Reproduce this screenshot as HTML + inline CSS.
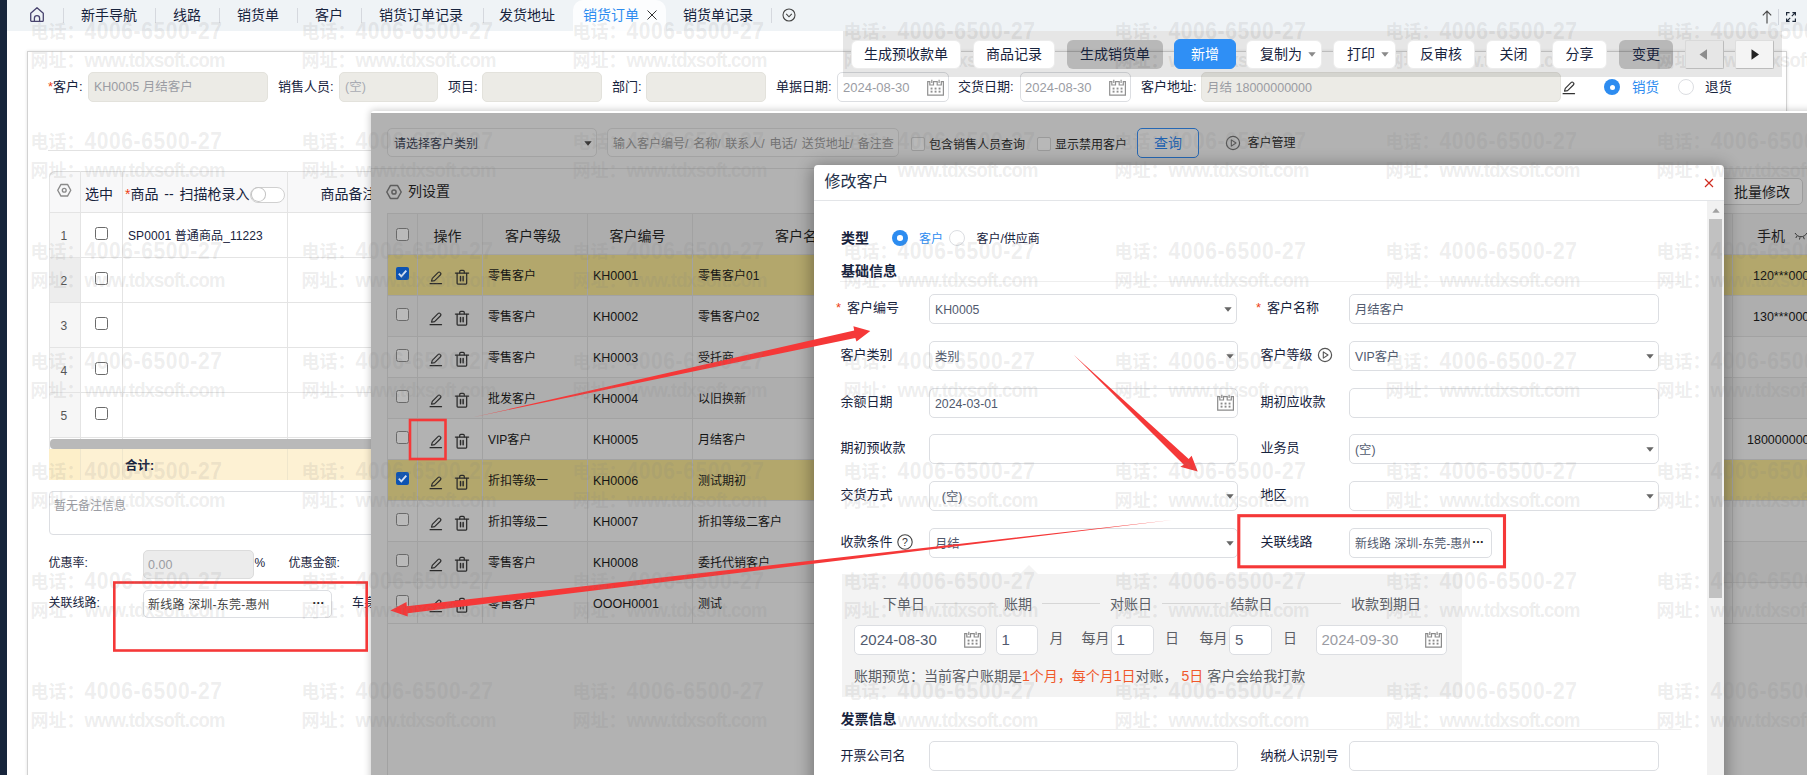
<!DOCTYPE html>
<html lang="zh-CN"><head><meta charset="utf-8"><title>销货订单 - 修改客户</title>
<style>
html,body{margin:0;padding:0;}
body{width:1807px;height:775px;overflow:hidden;background:#fff;position:relative;
 font-family:"Liberation Sans","Noto Sans CJK SC",sans-serif;}
.b{position:absolute;box-sizing:border-box;display:block;}
.t{position:absolute;white-space:nowrap;display:block;}
.bd{font-weight:bold;}
#page{position:absolute;left:0;top:0;width:1807px;height:775px;overflow:hidden;}
.wm{position:absolute;white-space:nowrap;font-weight:bold;font-size:18px;color:rgba(128,128,128,0.14);line-height:24px;height:24px;}
.wm i{font-style:normal;font-size:21px;letter-spacing:0.6px;display:inline-block;transform:scaleY(1.12);transform-origin:50% 56%;}
.wm u{text-decoration:none;font-weight:700;font-size:18.5px;letter-spacing:-0.83px;display:inline-block;transform:scaleY(1.1);transform-origin:50% 60%;}
.btn{position:absolute;box-sizing:border-box;height:28.5px;top:40px;border-radius:6px;background:#fff;border:1px solid #ececec;
 font-size:14px;line-height:27px;text-align:center;color:#17233d;white-space:nowrap;}
.fld{position:absolute;box-sizing:border-box;border:1px solid #dcdee2;border-radius:5px;background:#fff;}
.fb{position:absolute;box-sizing:border-box;border:1px solid #e3e2dc;border-radius:5px;background:#ecebe6;}
</style></head><body><div id="page">

<div class="b" style="left:0px;top:0px;width:1807px;height:30.5px;background:#eff3f6;"></div>
<div class="b" style="left:0px;top:0px;width:7.3px;height:775px;background:#17253b;"></div>
<div class="b" style="left:27px;top:51px;width:1759.8px;height:749px;border:1px solid #d2d2d2;box-shadow:0 0 3px rgba(0,0,0,0.12);background:#fff;"></div>
<div class="b" style="left:572.5px;top:0px;width:93.5px;height:30.5px;background:#fcfdfe;border-radius:10px 10px 0 0;"></div>
<span class="t " style="left:81px;top:5px;height:20px;line-height:20px;font-size:14px;color:#17233d;">新手导航</span>
<span class="t " style="left:173px;top:5px;height:20px;line-height:20px;font-size:14px;color:#17233d;">线路</span>
<span class="t " style="left:237px;top:5px;height:20px;line-height:20px;font-size:14px;color:#17233d;">销货单</span>
<span class="t " style="left:315px;top:5px;height:20px;line-height:20px;font-size:14px;color:#17233d;">客户</span>
<span class="t " style="left:379px;top:5px;height:20px;line-height:20px;font-size:14px;color:#17233d;">销货订单记录</span>
<span class="t " style="left:499px;top:5px;height:20px;line-height:20px;font-size:14px;color:#17233d;">发货地址</span>
<span class="t " style="left:683px;top:5px;height:20px;line-height:20px;font-size:14px;color:#17233d;">销货单记录</span>
<span class="t " style="left:583px;top:5px;height:20px;line-height:20px;font-size:14px;color:#2d8cf0;">销货订单</span>
<svg class="b" style="left:646px;top:9px;" width="12" height="12" viewBox="0 0 12 12" ><path d="M1.5 1.5 L10.5 10.5 M10.5 1.5 L1.5 10.5" stroke="#333" stroke-width="1" fill="none"/></svg>
<div class="b" style="left:63px;top:8px;width:1px;height:15px;background:#d5d8de;"></div>
<div class="b" style="left:155px;top:8px;width:1px;height:15px;background:#d5d8de;"></div>
<div class="b" style="left:219px;top:8px;width:1px;height:15px;background:#d5d8de;"></div>
<div class="b" style="left:297px;top:8px;width:1px;height:15px;background:#d5d8de;"></div>
<div class="b" style="left:361px;top:8px;width:1px;height:15px;background:#d5d8de;"></div>
<div class="b" style="left:483px;top:8px;width:1px;height:15px;background:#d5d8de;"></div>
<div class="b" style="left:771px;top:8px;width:1px;height:15px;background:#d5d8de;"></div>
<svg class="b" style="left:30px;top:7px;" width="14" height="15.2" viewBox="0 0 14 15.2" ><path d="M0.7 6.3 L7 0.8 L13.3 6.3 V13.6 a0.8 0.8 0 0 1 -0.8 0.8 H1.5 a0.8 0.8 0 0 1 -0.8 -0.8 Z" fill="none" stroke="#48436e" stroke-width="1.3" stroke-linejoin="round"/><path d="M4.4 14.3 V11.2 a2.6 2.6 0 0 1 5.2 0 V14.3" fill="none" stroke="#48436e" stroke-width="1.3"/></svg>
<svg class="b" style="left:782px;top:8px;" width="14" height="14" viewBox="0 0 14 14" ><circle cx="7" cy="7" r="6" fill="none" stroke="#444" stroke-width="1.1"/><path d="M4.2 5.8 L7 8.8 L9.8 5.8" fill="none" stroke="#444" stroke-width="1.1"/></svg>
<svg class="b" style="left:1761.8px;top:10.3px;" width="10" height="14" viewBox="0 0 10 14" ><path d="M5 13.5 V1.4 M0.8 5.4 L5 1 L9.2 5.4" fill="none" stroke="#4a4a4a" stroke-width="1.15"/></svg>
<div class="b" style="left:1778px;top:8.5px;width:1px;height:16px;background:#cfd3da;"></div>
<svg class="b" style="left:1786px;top:12px;" width="10" height="10" viewBox="0 0 10 10" ><path d="M0.6 3.6 V0.6 H3.6 M9.4 6.4 V9.4 H6.4 M5.8 4.2 L9.3 0.7 M6.4 0.6 H9.4 V3.6 M4.2 5.8 L0.7 9.3 M0.6 6.4 V9.4 H3.6" fill="none" stroke="#1f2a3a" stroke-width="1.2"/></svg>
<span class="t " style="left:48px;top:77px;height:20px;line-height:20px;font-size:13px;color:#17233d;"><span style="color:#ed4014">*</span>客户:</span>
<div class="fb" style="left:88px;top:72px;width:180px;height:29.5px;"></div>
<span class="t " style="left:94px;top:77px;height:20px;line-height:20px;font-size:12.5px;color:#9a9ca3;">KH0005 月结客户</span>
<span class="t " style="left:278px;top:77px;height:20px;line-height:20px;font-size:13px;color:#17233d;">销售人员:</span>
<div class="fb" style="left:339px;top:72px;width:99px;height:29.5px;"></div>
<span class="t " style="left:345px;top:77px;height:20px;line-height:20px;font-size:12.5px;color:#a9abb3;">(空)</span>
<span class="t " style="left:448px;top:77px;height:20px;line-height:20px;font-size:13px;color:#17233d;">项目:</span>
<div class="fb" style="left:482px;top:72px;width:120px;height:29.5px;"></div>
<span class="t " style="left:612px;top:77px;height:20px;line-height:20px;font-size:13px;color:#17233d;">部门:</span>
<div class="fb" style="left:646px;top:72px;width:120px;height:29.5px;"></div>
<span class="t " style="left:776px;top:77px;height:20px;line-height:20px;font-size:13px;color:#17233d;">单据日期:</span>
<div class="fld" style="left:837px;top:72px;width:111.5px;height:29.5px;"></div>
<span class="t " style="left:843px;top:77.5px;height:20px;line-height:20px;font-size:13px;color:#9a9ca3;">2024-08-30</span>
<svg class="b" style="left:926.5px;top:78.5px;" width="17" height="17" viewBox="0 0 17 17" ><g fill="none" stroke="#909090" stroke-width="1.2" stroke-linejoin="miter"><path d="M0.7 2.7 H2.8 V6 H6.5 V2.7 H10.2 V6 H14.3 V2.7 H16.4 V16.1 H0.7 Z"/><path d="M4.8 0.7 V4 M12.1 0.7 V4"/></g><g fill="#909090"><rect x="3.6" y="8.6" width="1.9" height="1.9"/><rect x="7.6" y="8.6" width="1.9" height="1.9"/><rect x="11.6" y="8.6" width="1.9" height="1.9"/><rect x="3.6" y="11.7" width="1.9" height="1.9"/><rect x="7.6" y="11.7" width="1.9" height="1.9"/><rect x="11.6" y="11.7" width="1.9" height="1.9"/></g></svg>
<span class="t " style="left:958px;top:77px;height:20px;line-height:20px;font-size:13px;color:#17233d;">交货日期:</span>
<div class="fld" style="left:1019.5px;top:72px;width:111px;height:29.5px;"></div>
<span class="t " style="left:1025px;top:77.5px;height:20px;line-height:20px;font-size:13px;color:#9a9ca3;">2024-08-30</span>
<svg class="b" style="left:1108.5px;top:78.5px;" width="17" height="17" viewBox="0 0 17 17" ><g fill="none" stroke="#909090" stroke-width="1.2" stroke-linejoin="miter"><path d="M0.7 2.7 H2.8 V6 H6.5 V2.7 H10.2 V6 H14.3 V2.7 H16.4 V16.1 H0.7 Z"/><path d="M4.8 0.7 V4 M12.1 0.7 V4"/></g><g fill="#909090"><rect x="3.6" y="8.6" width="1.9" height="1.9"/><rect x="7.6" y="8.6" width="1.9" height="1.9"/><rect x="11.6" y="8.6" width="1.9" height="1.9"/><rect x="3.6" y="11.7" width="1.9" height="1.9"/><rect x="7.6" y="11.7" width="1.9" height="1.9"/><rect x="11.6" y="11.7" width="1.9" height="1.9"/></g></svg>
<span class="t " style="left:1141px;top:77px;height:20px;line-height:20px;font-size:13px;color:#17233d;">客户地址:</span>
<div class="fb" style="left:1201px;top:72px;width:360px;height:29.5px;"></div>
<span class="t " style="left:1207px;top:77.5px;height:20px;line-height:20px;font-size:12.5px;color:#9a9ca3;">月结 18000000000</span>
<svg class="b" style="left:1560.8px;top:79.8px;" width="15.4" height="15.4" viewBox="0 0 14 14" ><g fill="none" stroke="#333" stroke-width="1.05" stroke-linejoin="round" stroke-linecap="round"><path d="M3.2 10.2 L3.9 7.6 L9.3 2.2 a1.1 1.1 0 0 1 1.6 0 l0.5 0.5 a1.1 1.1 0 0 1 0 1.6 L6 9.7 Z"/><path d="M1.9 12.4 H12.3"/></g></svg>
<div class="b" style="left:1604px;top:79px;width:16px;height:16px;border-radius:50%;background:#2d8cf0;"></div>
<div class="b" style="left:1609.5px;top:84.5px;width:5px;height:5px;border-radius:50%;background:#fff;"></div>
<span class="t " style="left:1632px;top:78.3px;height:20px;line-height:20px;font-size:13.5px;color:#2d8cf0;">销货</span>
<div class="b" style="left:1678px;top:79px;width:16px;height:16px;border-radius:50%;border:1px solid #dcdee2;background:#fff;"></div>
<span class="t " style="left:1705px;top:78.3px;height:20px;line-height:20px;font-size:13.5px;color:#17233d;">退货</span>
<div class="b" style="left:48px;top:150px;width:332px;height:1px;background:#e2e2e2;"></div>
<div class="b" style="left:48.5px;top:171px;width:331.5px;height:41px;background:#f8f8f9;border-top:1px solid #dcdcdc;border-left:1px solid #dcdcdc;border-radius:6px 0 0 0;"></div>
<div class="b" style="left:48.5px;top:212px;width:31.5px;height:45px;background:#f6f6f6;"></div>
<div class="b" style="left:48.5px;top:257px;width:31.5px;height:45px;background:#ededed;"></div>
<div class="b" style="left:48.5px;top:302px;width:31.5px;height:45px;background:#f6f6f6;"></div>
<div class="b" style="left:48.5px;top:347px;width:31.5px;height:45px;background:#f6f6f6;"></div>
<div class="b" style="left:48.5px;top:392px;width:31.5px;height:45px;background:#f6f6f6;"></div>
<div class="b" style="left:48.5px;top:212px;width:331.5px;height:1px;background:#e4e4e4;"></div>
<div class="b" style="left:48.5px;top:257px;width:331.5px;height:1px;background:#e4e4e4;"></div>
<div class="b" style="left:48.5px;top:302px;width:331.5px;height:1px;background:#e4e4e4;"></div>
<div class="b" style="left:48.5px;top:347px;width:331.5px;height:1px;background:#e4e4e4;"></div>
<div class="b" style="left:48.5px;top:392px;width:331.5px;height:1px;background:#e4e4e4;"></div>
<div class="b" style="left:48.5px;top:437px;width:331.5px;height:1px;background:#e4e4e4;"></div>
<div class="b" style="left:48.5px;top:177px;width:1px;height:303px;background:#e4e4e4;"></div>
<div class="b" style="left:80px;top:171px;width:1px;height:309px;background:#e4e4e4;"></div>
<div class="b" style="left:122px;top:171px;width:1px;height:309px;background:#e4e4e4;"></div>
<div class="b" style="left:287px;top:171px;width:1px;height:309px;background:#e4e4e4;"></div>
<svg class="b" style="left:57.15px;top:182.75px;" width="14.5" height="14.5" viewBox="0 0 16 16" ><g fill="none" stroke="#8a8a8a" stroke-width="1.5" stroke-linejoin="round"><path d="M0.8 8 L4.4 1.6 H11.6 L15.2 8 L11.6 14.4 H4.4 Z"/><circle cx="8" cy="8" r="2.1"/></g></svg>
<span class="t " style="left:85px;top:184px;height:20px;line-height:20px;font-size:14px;color:#17233d;">选中</span>
<span class="t " style="left:125px;top:184px;height:20px;line-height:20px;font-size:14px;color:#17233d;word-spacing:2px;"><span style="color:#ed4014">*</span>商品 -- 扫描枪录入</span>
<div class="b" style="left:250.3px;top:186.8px;width:34.5px;height:16px;border:1px solid #d0d0d0;border-radius:8px;background:#fff;"></div>
<div class="b" style="left:250.8px;top:187.3px;width:15.5px;height:15px;border:1px solid #c4c4c4;border-radius:50%;background:#fff;"></div>
<span class="t " style="left:320.5px;top:184px;height:20px;line-height:20px;font-size:14px;color:#17233d;">商品备注</span>
<span class="t " style="left:53.8px;top:225.7px;width:20px;text-align:center;height:20px;line-height:20px;font-size:12px;color:#555;">1</span>
<div class="b" style="left:95px;top:227px;width:13px;height:13px;border:1px solid #6b6b6b;border-radius:2.5px;background:#fff;"></div>
<span class="t " style="left:53.8px;top:270.7px;width:20px;text-align:center;height:20px;line-height:20px;font-size:12px;color:#555;">2</span>
<div class="b" style="left:95px;top:272px;width:13px;height:13px;border:1px solid #6b6b6b;border-radius:2.5px;background:#fff;"></div>
<span class="t " style="left:53.8px;top:315.7px;width:20px;text-align:center;height:20px;line-height:20px;font-size:12px;color:#555;">3</span>
<div class="b" style="left:95px;top:317px;width:13px;height:13px;border:1px solid #6b6b6b;border-radius:2.5px;background:#fff;"></div>
<span class="t " style="left:53.8px;top:360.7px;width:20px;text-align:center;height:20px;line-height:20px;font-size:12px;color:#555;">4</span>
<div class="b" style="left:95px;top:362px;width:13px;height:13px;border:1px solid #6b6b6b;border-radius:2.5px;background:#fff;"></div>
<span class="t " style="left:53.8px;top:405.7px;width:20px;text-align:center;height:20px;line-height:20px;font-size:12px;color:#555;">5</span>
<div class="b" style="left:95px;top:407px;width:13px;height:13px;border:1px solid #6b6b6b;border-radius:2.5px;background:#fff;"></div>
<span class="t " style="left:128px;top:226px;height:20px;line-height:20px;font-size:12px;color:#17233d;letter-spacing:0.1px;">SP0001 普通商品_11223</span>
<div class="b" style="left:49.5px;top:439px;width:330.5px;height:9.5px;background:#b9b9b9;border-radius:4px 0 0 4px;"></div>
<div class="b" style="left:48.5px;top:448.5px;width:331.5px;height:31.5px;background:#fdf1d3;"></div>
<div class="b" style="left:48.5px;top:448.5px;width:31.5px;height:31.5px;background:#fdefc9;"></div>
<div class="b" style="left:80px;top:448.5px;width:1px;height:31.5px;background:#efe6cc;"></div>
<div class="b" style="left:122px;top:448.5px;width:1px;height:31.5px;background:#efe6cc;"></div>
<div class="b" style="left:287px;top:448.5px;width:1px;height:31.5px;background:#efe6cc;"></div>
<span class="t bd" style="left:125px;top:455.5px;height:20px;line-height:20px;font-size:12.5px;color:#17233d;">合计:</span>
<div class="fld" style="left:48.5px;top:491px;width:360px;height:43.5px;border-radius:4px;"></div>
<span class="t " style="left:54px;top:496.3px;height:20px;line-height:20px;font-size:12px;color:#9a9ca3;">暂无备注信息</span>
<span class="t " style="left:48.5px;top:553px;height:20px;line-height:20px;font-size:12px;color:#17233d;">优惠率:</span>
<div class="fld" style="left:142.5px;top:550px;width:111px;height:28.5px;background:#ececec;border-color:#dcdcdc;"></div>
<span class="t " style="left:148px;top:554.5px;height:20px;line-height:20px;font-size:12.5px;color:#9a9ca3;">0.00</span>
<span class="t " style="left:254.5px;top:552.5px;height:20px;line-height:20px;font-size:12px;color:#17233d;">%</span>
<span class="t " style="left:288.5px;top:553px;height:20px;line-height:20px;font-size:12px;color:#17233d;">优惠金额:</span>
<span class="t " style="left:48.5px;top:593.3px;height:20px;line-height:20px;font-size:12px;color:#17233d;">关联线路:</span>
<div class="fld" style="left:142.5px;top:589.5px;width:189px;height:28.5px;"></div>
<span class="t " style="left:148px;top:595.3px;height:20px;line-height:20px;font-size:12px;color:#444;letter-spacing:0.2px;">新线路 深圳-东莞-惠州</span>
<span class="t bd" style="left:312.5px;top:593.3px;height:20px;line-height:20px;font-size:12.5px;color:#222;letter-spacing:-0.2px;">···</span>
<span class="t " style="left:352px;top:593px;height:20px;line-height:20px;font-size:12px;color:#17233d;">车身</span>
<div class="b" style="left:370.5px;top:111px;width:1529.5px;height:689px;background:#fff;border-radius:3px 0 0 0;box-shadow:0 0 7px 1px rgba(0,0,0,0.2);"></div>
<div class="b" style="left:371px;top:113px;width:1529px;height:687px;background:#b2b2b2;"></div>
<div class="b" style="left:371px;top:168px;width:1436px;height:1px;background:#a2a2a2;"></div>
<div class="b" style="left:387px;top:128.4px;width:210px;height:28.6px;border:1px solid #a3a3a3;border-radius:5px;background:#b4b4b4;"></div>
<span class="t " style="left:394px;top:133.5px;height:20px;line-height:20px;font-size:12px;color:#2a2f3d;">请选择客户类别</span>
<svg class="b" style="left:583.5px;top:140.5px;" width="8" height="5" viewBox="0 0 8 5" ><path d="M0.3 0.3 H7.7 L4 4.7 Z" fill="#333"/></svg>
<div class="b" style="left:607.2px;top:128.4px;width:291.6px;height:28.6px;border:1px solid #a3a3a3;border-radius:5px;background:#b4b4b4;overflow:hidden;"></div>
<span class="t" style="left:613px;top:133.500000px;height:20px;line-height:20px;font-size:12px;color:#727272;width:280.5px;overflow:hidden;word-spacing:1.5px;">输入客户编号/ 名称/ 联系人/ 电话/ 送货地址/ 备注查询</span>
<div class="b" style="left:911px;top:137px;width:13.5px;height:13.5px;border:1px solid #9a9a9a;border-radius:2px;background:#b8b8b8;"></div>
<span class="t " style="left:929px;top:134.5px;height:20px;line-height:20px;font-size:12px;color:#1c1c1c;">包含销售人员查询</span>
<div class="b" style="left:1037.3px;top:137px;width:13.5px;height:13.5px;border:1px solid #9a9a9a;border-radius:2px;background:#b8b8b8;"></div>
<span class="t " style="left:1055px;top:134.5px;height:20px;line-height:20px;font-size:12px;color:#1c1c1c;">显示禁用客户</span>
<div class="b" style="left:1137px;top:128px;width:62px;height:30px;border:1px solid #2668b4;border-radius:5px;background:#b6b6b6;"></div>
<span class="t " style="left:1138px;top:133px;width:60px;text-align:center;height:20px;line-height:20px;font-size:14px;color:#1f62b0;">查询</span>
<svg class="b" style="left:1225.4px;top:134.7px;" width="16" height="16" viewBox="0 0 16 16" ><circle cx="8" cy="8" r="6.6" fill="none" stroke="#555" stroke-width="1.2"/><path d="M6.3 4.9 L11 8 L6.3 11.1 Z" fill="none" stroke="#555" stroke-width="1.1" stroke-linejoin="round"/></svg>
<span class="t " style="left:1247.4px;top:132.6px;height:20px;line-height:20px;font-size:12px;color:#1c1c1c;">客户管理</span>
<svg class="b" style="left:386.4px;top:183.5px;" width="16" height="16" viewBox="0 0 16 16" ><g fill="none" stroke="#5e5e5e" stroke-width="1.5" stroke-linejoin="round"><path d="M0.8 8 L4.4 1.6 H11.6 L15.2 8 L11.6 14.4 H4.4 Z"/><circle cx="8" cy="8" r="2.1"/></g></svg>
<span class="t " style="left:408px;top:181px;height:20px;line-height:20px;font-size:14px;color:#1c1c1c;">列设置</span>
<div class="b" style="left:1700px;top:177.5px;width:103px;height:27.5px;border:1px solid #9c9c9c;border-radius:5px;background:#b9b9b9;"></div>
<span class="t " style="left:1734px;top:181.5px;height:20px;line-height:20px;font-size:14px;color:#1c1c1c;">批量修改</span>
<div class="b" style="left:387px;top:213px;width:1513px;height:41px;background:#adadad;border-radius:4px 0 0 0;"></div>
<div class="b" style="left:387px;top:254px;width:1513px;height:41px;background:#b3a76c;"></div>
<div class="b" style="left:387px;top:459px;width:1513px;height:41px;background:#b3a76c;"></div>
<div class="b" style="left:387px;top:295px;width:1513px;height:41px;background:#aeaeae;"></div>
<div class="b" style="left:387px;top:377px;width:1513px;height:41px;background:#aeaeae;"></div>
<div class="b" style="left:387px;top:541px;width:1513px;height:41px;background:#aeaeae;"></div>
<div class="b" style="left:387px;top:213px;width:1513px;height:1px;background:#a2a2a2;"></div>
<div class="b" style="left:387px;top:254px;width:1513px;height:1px;background:#a2a2a2;"></div>
<div class="b" style="left:387px;top:295px;width:1513px;height:1px;background:#a2a2a2;"></div>
<div class="b" style="left:387px;top:336px;width:1513px;height:1px;background:#a2a2a2;"></div>
<div class="b" style="left:387px;top:377px;width:1513px;height:1px;background:#a2a2a2;"></div>
<div class="b" style="left:387px;top:418px;width:1513px;height:1px;background:#a2a2a2;"></div>
<div class="b" style="left:387px;top:459px;width:1513px;height:1px;background:#a2a2a2;"></div>
<div class="b" style="left:387px;top:500px;width:1513px;height:1px;background:#a2a2a2;"></div>
<div class="b" style="left:387px;top:541px;width:1513px;height:1px;background:#a2a2a2;"></div>
<div class="b" style="left:387px;top:582px;width:1513px;height:1px;background:#a2a2a2;"></div>
<div class="b" style="left:387px;top:623px;width:1513px;height:1px;background:#a2a2a2;"></div>
<div class="b" style="left:387px;top:213px;width:1px;height:587px;background:#a2a2a2;"></div>
<div class="b" style="left:417px;top:213px;width:1px;height:410px;background:#a2a2a2;"></div>
<div class="b" style="left:482px;top:213px;width:1px;height:410px;background:#a2a2a2;"></div>
<div class="b" style="left:587px;top:213px;width:1px;height:410px;background:#a2a2a2;"></div>
<div class="b" style="left:692px;top:213px;width:1px;height:410px;background:#a2a2a2;"></div>
<div class="b" style="left:1732px;top:213px;width:1px;height:410px;background:#a2a2a2;"></div>
<div class="b" style="left:396px;top:228px;width:13px;height:13px;border:1px solid #6a6a6a;border-radius:2.5px;background:#bababa;"></div>
<span class="t " style="left:417.5px;top:225.8px;width:60px;text-align:center;height:20px;line-height:20px;font-size:14px;color:#1c1c1c;">操作</span>
<span class="t " style="left:483px;top:225.8px;width:100px;text-align:center;height:20px;line-height:20px;font-size:14px;color:#1c1c1c;">客户等级</span>
<span class="t " style="left:587.5px;top:225.8px;width:100px;text-align:center;height:20px;line-height:20px;font-size:14px;color:#1c1c1c;">客户编号</span>
<span class="t " style="left:775px;top:225.8px;height:20px;line-height:20px;font-size:14px;color:#1c1c1c;">客户名称</span>
<span class="t " style="left:1757px;top:225.8px;height:20px;line-height:20px;font-size:14px;color:#1c1c1c;">手机</span>
<svg class="b" style="left:1794px;top:231px;" width="14" height="10" viewBox="0 0 14 10" ><path d="M1 2 C4 7 10 7 13 2 M3 5 L1.8 7 M6 6.3 L5.5 8.5 M9.5 6 L10.3 8.2" fill="none" stroke="#333" stroke-width="1"/></svg>
<div class="b" style="left:396px;top:267px;width:13px;height:13px;border-radius:2px;background:#0d53b2;"></div><svg class="b" style="left:396px;top:267px;" width="13" height="13" viewBox="0 0 13 13" ><path d="M2.8 6.7 L5.3 9.3 L10.3 3.6" fill="none" stroke="#d3dff3" stroke-width="1.9"/></svg>
<svg class="b" style="left:428.3px;top:270.3px;" width="15.4" height="15.4" viewBox="0 0 14 14" ><g fill="none" stroke="#2a2a2a" stroke-width="1.05" stroke-linejoin="round" stroke-linecap="round"><path d="M3.2 10.2 L3.9 7.6 L9.3 2.2 a1.1 1.1 0 0 1 1.6 0 l0.5 0.5 a1.1 1.1 0 0 1 0 1.6 L6 9.7 Z"/><path d="M1.9 12.4 H12.3"/></g></svg>
<svg class="b" style="left:453.8px;top:269.3px;" width="16" height="17.1" viewBox="0 0 14 15" ><g fill="none" stroke="#2a2a2a" stroke-width="1.1" stroke-linejoin="round" stroke-linecap="round"><path d="M1.2 3.6 H12.8"/><path d="M5 3.4 V2.2 a0.9 0.9 0 0 1 0.9 -0.9 H8.1 a0.9 0.9 0 0 1 0.9 0.9 V3.4"/><path d="M2.7 3.8 V12.6 a0.7 0.7 0 0 0 0.7 0.7 H10.4 a0.7 0.7 0 0 0 0.7 -0.7 V3.8"/><path d="M5.7 6.5 V10.4 M8 6.5 V10.4" stroke-width="1.3"/></g></svg>
<span class="t " style="left:488px;top:266.2px;height:20px;line-height:20px;font-size:12px;color:#141414;">零售客户</span>
<span class="t " style="left:593px;top:266.2px;height:20px;line-height:20px;font-size:12.5px;color:#141414;">KH0001</span>
<span class="t " style="left:698px;top:266.2px;height:20px;line-height:20px;font-size:12px;color:#141414;">零售客户01</span>
<span class="t " style="left:1753px;top:266.2px;height:20px;line-height:20px;font-size:12.5px;color:#141414;">120***000</span>
<div class="b" style="left:396px;top:308px;width:13px;height:13px;border:1px solid #6a6a6a;border-radius:2.5px;background:#bababa;"></div>
<svg class="b" style="left:428.3px;top:311.3px;" width="15.4" height="15.4" viewBox="0 0 14 14" ><g fill="none" stroke="#2a2a2a" stroke-width="1.05" stroke-linejoin="round" stroke-linecap="round"><path d="M3.2 10.2 L3.9 7.6 L9.3 2.2 a1.1 1.1 0 0 1 1.6 0 l0.5 0.5 a1.1 1.1 0 0 1 0 1.6 L6 9.7 Z"/><path d="M1.9 12.4 H12.3"/></g></svg>
<svg class="b" style="left:453.8px;top:310.3px;" width="16" height="17.1" viewBox="0 0 14 15" ><g fill="none" stroke="#2a2a2a" stroke-width="1.1" stroke-linejoin="round" stroke-linecap="round"><path d="M1.2 3.6 H12.8"/><path d="M5 3.4 V2.2 a0.9 0.9 0 0 1 0.9 -0.9 H8.1 a0.9 0.9 0 0 1 0.9 0.9 V3.4"/><path d="M2.7 3.8 V12.6 a0.7 0.7 0 0 0 0.7 0.7 H10.4 a0.7 0.7 0 0 0 0.7 -0.7 V3.8"/><path d="M5.7 6.5 V10.4 M8 6.5 V10.4" stroke-width="1.3"/></g></svg>
<span class="t " style="left:488px;top:307.2px;height:20px;line-height:20px;font-size:12px;color:#141414;">零售客户</span>
<span class="t " style="left:593px;top:307.2px;height:20px;line-height:20px;font-size:12.5px;color:#141414;">KH0002</span>
<span class="t " style="left:698px;top:307.2px;height:20px;line-height:20px;font-size:12px;color:#141414;">零售客户02</span>
<span class="t " style="left:1753px;top:307.2px;height:20px;line-height:20px;font-size:12.5px;color:#141414;">130***000</span>
<div class="b" style="left:396px;top:349px;width:13px;height:13px;border:1px solid #6a6a6a;border-radius:2.5px;background:#bababa;"></div>
<svg class="b" style="left:428.3px;top:352.3px;" width="15.4" height="15.4" viewBox="0 0 14 14" ><g fill="none" stroke="#2a2a2a" stroke-width="1.05" stroke-linejoin="round" stroke-linecap="round"><path d="M3.2 10.2 L3.9 7.6 L9.3 2.2 a1.1 1.1 0 0 1 1.6 0 l0.5 0.5 a1.1 1.1 0 0 1 0 1.6 L6 9.7 Z"/><path d="M1.9 12.4 H12.3"/></g></svg>
<svg class="b" style="left:453.8px;top:351.3px;" width="16" height="17.1" viewBox="0 0 14 15" ><g fill="none" stroke="#2a2a2a" stroke-width="1.1" stroke-linejoin="round" stroke-linecap="round"><path d="M1.2 3.6 H12.8"/><path d="M5 3.4 V2.2 a0.9 0.9 0 0 1 0.9 -0.9 H8.1 a0.9 0.9 0 0 1 0.9 0.9 V3.4"/><path d="M2.7 3.8 V12.6 a0.7 0.7 0 0 0 0.7 0.7 H10.4 a0.7 0.7 0 0 0 0.7 -0.7 V3.8"/><path d="M5.7 6.5 V10.4 M8 6.5 V10.4" stroke-width="1.3"/></g></svg>
<span class="t " style="left:488px;top:348.2px;height:20px;line-height:20px;font-size:12px;color:#141414;">零售客户</span>
<span class="t " style="left:593px;top:348.2px;height:20px;line-height:20px;font-size:12.5px;color:#141414;">KH0003</span>
<span class="t " style="left:698px;top:348.2px;height:20px;line-height:20px;font-size:12px;color:#141414;">受托商</span>
<div class="b" style="left:396px;top:390px;width:13px;height:13px;border:1px solid #6a6a6a;border-radius:2.5px;background:#bababa;"></div>
<svg class="b" style="left:428.3px;top:393.3px;" width="15.4" height="15.4" viewBox="0 0 14 14" ><g fill="none" stroke="#2a2a2a" stroke-width="1.05" stroke-linejoin="round" stroke-linecap="round"><path d="M3.2 10.2 L3.9 7.6 L9.3 2.2 a1.1 1.1 0 0 1 1.6 0 l0.5 0.5 a1.1 1.1 0 0 1 0 1.6 L6 9.7 Z"/><path d="M1.9 12.4 H12.3"/></g></svg>
<svg class="b" style="left:453.8px;top:392.3px;" width="16" height="17.1" viewBox="0 0 14 15" ><g fill="none" stroke="#2a2a2a" stroke-width="1.1" stroke-linejoin="round" stroke-linecap="round"><path d="M1.2 3.6 H12.8"/><path d="M5 3.4 V2.2 a0.9 0.9 0 0 1 0.9 -0.9 H8.1 a0.9 0.9 0 0 1 0.9 0.9 V3.4"/><path d="M2.7 3.8 V12.6 a0.7 0.7 0 0 0 0.7 0.7 H10.4 a0.7 0.7 0 0 0 0.7 -0.7 V3.8"/><path d="M5.7 6.5 V10.4 M8 6.5 V10.4" stroke-width="1.3"/></g></svg>
<span class="t " style="left:488px;top:389.2px;height:20px;line-height:20px;font-size:12px;color:#141414;">批发客户</span>
<span class="t " style="left:593px;top:389.2px;height:20px;line-height:20px;font-size:12.5px;color:#141414;">KH0004</span>
<span class="t " style="left:698px;top:389.2px;height:20px;line-height:20px;font-size:12px;color:#141414;">以旧换新</span>
<div class="b" style="left:396px;top:431px;width:13px;height:13px;border:1px solid #6a6a6a;border-radius:2.5px;background:#bababa;"></div>
<svg class="b" style="left:428.3px;top:434.3px;" width="15.4" height="15.4" viewBox="0 0 14 14" ><g fill="none" stroke="#2a2a2a" stroke-width="1.05" stroke-linejoin="round" stroke-linecap="round"><path d="M3.2 10.2 L3.9 7.6 L9.3 2.2 a1.1 1.1 0 0 1 1.6 0 l0.5 0.5 a1.1 1.1 0 0 1 0 1.6 L6 9.7 Z"/><path d="M1.9 12.4 H12.3"/></g></svg>
<svg class="b" style="left:453.8px;top:433.3px;" width="16" height="17.1" viewBox="0 0 14 15" ><g fill="none" stroke="#2a2a2a" stroke-width="1.1" stroke-linejoin="round" stroke-linecap="round"><path d="M1.2 3.6 H12.8"/><path d="M5 3.4 V2.2 a0.9 0.9 0 0 1 0.9 -0.9 H8.1 a0.9 0.9 0 0 1 0.9 0.9 V3.4"/><path d="M2.7 3.8 V12.6 a0.7 0.7 0 0 0 0.7 0.7 H10.4 a0.7 0.7 0 0 0 0.7 -0.7 V3.8"/><path d="M5.7 6.5 V10.4 M8 6.5 V10.4" stroke-width="1.3"/></g></svg>
<span class="t " style="left:488px;top:430.2px;height:20px;line-height:20px;font-size:12px;color:#141414;">VIP客户</span>
<span class="t " style="left:593px;top:430.2px;height:20px;line-height:20px;font-size:12.5px;color:#141414;">KH0005</span>
<span class="t " style="left:698px;top:430.2px;height:20px;line-height:20px;font-size:12px;color:#141414;">月结客户</span>
<span class="t " style="left:1747px;top:430.2px;height:20px;line-height:20px;font-size:12.5px;color:#141414;">18000000000</span>
<div class="b" style="left:396px;top:472px;width:13px;height:13px;border-radius:2px;background:#0d53b2;"></div><svg class="b" style="left:396px;top:472px;" width="13" height="13" viewBox="0 0 13 13" ><path d="M2.8 6.7 L5.3 9.3 L10.3 3.6" fill="none" stroke="#d3dff3" stroke-width="1.9"/></svg>
<svg class="b" style="left:428.3px;top:475.3px;" width="15.4" height="15.4" viewBox="0 0 14 14" ><g fill="none" stroke="#2a2a2a" stroke-width="1.05" stroke-linejoin="round" stroke-linecap="round"><path d="M3.2 10.2 L3.9 7.6 L9.3 2.2 a1.1 1.1 0 0 1 1.6 0 l0.5 0.5 a1.1 1.1 0 0 1 0 1.6 L6 9.7 Z"/><path d="M1.9 12.4 H12.3"/></g></svg>
<svg class="b" style="left:453.8px;top:474.3px;" width="16" height="17.1" viewBox="0 0 14 15" ><g fill="none" stroke="#2a2a2a" stroke-width="1.1" stroke-linejoin="round" stroke-linecap="round"><path d="M1.2 3.6 H12.8"/><path d="M5 3.4 V2.2 a0.9 0.9 0 0 1 0.9 -0.9 H8.1 a0.9 0.9 0 0 1 0.9 0.9 V3.4"/><path d="M2.7 3.8 V12.6 a0.7 0.7 0 0 0 0.7 0.7 H10.4 a0.7 0.7 0 0 0 0.7 -0.7 V3.8"/><path d="M5.7 6.5 V10.4 M8 6.5 V10.4" stroke-width="1.3"/></g></svg>
<span class="t " style="left:488px;top:471.2px;height:20px;line-height:20px;font-size:12px;color:#141414;">折扣等级一</span>
<span class="t " style="left:593px;top:471.2px;height:20px;line-height:20px;font-size:12.5px;color:#141414;">KH0006</span>
<span class="t " style="left:698px;top:471.2px;height:20px;line-height:20px;font-size:12px;color:#141414;">测试期初</span>
<div class="b" style="left:396px;top:513px;width:13px;height:13px;border:1px solid #6a6a6a;border-radius:2.5px;background:#bababa;"></div>
<svg class="b" style="left:428.3px;top:516.3px;" width="15.4" height="15.4" viewBox="0 0 14 14" ><g fill="none" stroke="#2a2a2a" stroke-width="1.05" stroke-linejoin="round" stroke-linecap="round"><path d="M3.2 10.2 L3.9 7.6 L9.3 2.2 a1.1 1.1 0 0 1 1.6 0 l0.5 0.5 a1.1 1.1 0 0 1 0 1.6 L6 9.7 Z"/><path d="M1.9 12.4 H12.3"/></g></svg>
<svg class="b" style="left:453.8px;top:515.3px;" width="16" height="17.1" viewBox="0 0 14 15" ><g fill="none" stroke="#2a2a2a" stroke-width="1.1" stroke-linejoin="round" stroke-linecap="round"><path d="M1.2 3.6 H12.8"/><path d="M5 3.4 V2.2 a0.9 0.9 0 0 1 0.9 -0.9 H8.1 a0.9 0.9 0 0 1 0.9 0.9 V3.4"/><path d="M2.7 3.8 V12.6 a0.7 0.7 0 0 0 0.7 0.7 H10.4 a0.7 0.7 0 0 0 0.7 -0.7 V3.8"/><path d="M5.7 6.5 V10.4 M8 6.5 V10.4" stroke-width="1.3"/></g></svg>
<span class="t " style="left:488px;top:512.2px;height:20px;line-height:20px;font-size:12px;color:#141414;">折扣等级二</span>
<span class="t " style="left:593px;top:512.2px;height:20px;line-height:20px;font-size:12.5px;color:#141414;">KH0007</span>
<span class="t " style="left:698px;top:512.2px;height:20px;line-height:20px;font-size:12px;color:#141414;">折扣等级二客户</span>
<div class="b" style="left:396px;top:554px;width:13px;height:13px;border:1px solid #6a6a6a;border-radius:2.5px;background:#bababa;"></div>
<svg class="b" style="left:428.3px;top:557.3px;" width="15.4" height="15.4" viewBox="0 0 14 14" ><g fill="none" stroke="#2a2a2a" stroke-width="1.05" stroke-linejoin="round" stroke-linecap="round"><path d="M3.2 10.2 L3.9 7.6 L9.3 2.2 a1.1 1.1 0 0 1 1.6 0 l0.5 0.5 a1.1 1.1 0 0 1 0 1.6 L6 9.7 Z"/><path d="M1.9 12.4 H12.3"/></g></svg>
<svg class="b" style="left:453.8px;top:556.3px;" width="16" height="17.1" viewBox="0 0 14 15" ><g fill="none" stroke="#2a2a2a" stroke-width="1.1" stroke-linejoin="round" stroke-linecap="round"><path d="M1.2 3.6 H12.8"/><path d="M5 3.4 V2.2 a0.9 0.9 0 0 1 0.9 -0.9 H8.1 a0.9 0.9 0 0 1 0.9 0.9 V3.4"/><path d="M2.7 3.8 V12.6 a0.7 0.7 0 0 0 0.7 0.7 H10.4 a0.7 0.7 0 0 0 0.7 -0.7 V3.8"/><path d="M5.7 6.5 V10.4 M8 6.5 V10.4" stroke-width="1.3"/></g></svg>
<span class="t " style="left:488px;top:553.2px;height:20px;line-height:20px;font-size:12px;color:#141414;">零售客户</span>
<span class="t " style="left:593px;top:553.2px;height:20px;line-height:20px;font-size:12.5px;color:#141414;">KH0008</span>
<span class="t " style="left:698px;top:553.2px;height:20px;line-height:20px;font-size:12px;color:#141414;">委托代销客户</span>
<div class="b" style="left:396px;top:595px;width:13px;height:13px;border:1px solid #6a6a6a;border-radius:2.5px;background:#bababa;"></div>
<svg class="b" style="left:428.3px;top:598.3px;" width="15.4" height="15.4" viewBox="0 0 14 14" ><g fill="none" stroke="#2a2a2a" stroke-width="1.05" stroke-linejoin="round" stroke-linecap="round"><path d="M3.2 10.2 L3.9 7.6 L9.3 2.2 a1.1 1.1 0 0 1 1.6 0 l0.5 0.5 a1.1 1.1 0 0 1 0 1.6 L6 9.7 Z"/><path d="M1.9 12.4 H12.3"/></g></svg>
<svg class="b" style="left:453.8px;top:597.3px;" width="16" height="17.1" viewBox="0 0 14 15" ><g fill="none" stroke="#2a2a2a" stroke-width="1.1" stroke-linejoin="round" stroke-linecap="round"><path d="M1.2 3.6 H12.8"/><path d="M5 3.4 V2.2 a0.9 0.9 0 0 1 0.9 -0.9 H8.1 a0.9 0.9 0 0 1 0.9 0.9 V3.4"/><path d="M2.7 3.8 V12.6 a0.7 0.7 0 0 0 0.7 0.7 H10.4 a0.7 0.7 0 0 0 0.7 -0.7 V3.8"/><path d="M5.7 6.5 V10.4 M8 6.5 V10.4" stroke-width="1.3"/></g></svg>
<span class="t " style="left:488px;top:594.2px;height:20px;line-height:20px;font-size:12px;color:#141414;">零售客户</span>
<span class="t " style="left:593px;top:594.2px;height:20px;line-height:20px;font-size:12.5px;color:#141414;">OOOH0001</span>
<span class="t " style="left:698px;top:594.2px;height:20px;line-height:20px;font-size:12px;color:#141414;">测试</span>
<div class="b" style="left:813.8px;top:165px;width:909.8px;height:635px;background:#fff;border-radius:4px 4px 0 0;box-shadow:0 3px 16px 3px rgba(0,0,0,0.32);"></div>
<span class="t " style="left:824.5px;top:169.5px;height:24px;line-height:24px;font-size:16px;color:#243048;">修改客户</span>
<svg class="b" style="left:1704px;top:177.5px;" width="10" height="10" viewBox="0 0 10 10" ><path d="M1 1 L9 9 M9 1 L1 9" stroke="#cf2a1e" stroke-width="1.15" fill="none"/></svg>
<div class="b" style="left:813.8px;top:200px;width:909.8px;height:1px;background:#e3e5e8;"></div>
<div class="b" style="left:1707px;top:201px;width:16.5px;height:599px;background:#f1f1f1;"></div>
<div class="b" style="left:1709px;top:218.5px;width:13px;height:379.5px;background:#c1c1c1;"></div>
<svg class="b" style="left:1712px;top:207.5px;" width="8" height="5" viewBox="0 0 8 5" ><path d="M0.3 4.7 H7.7 L4 0.3 Z" fill="#a0a0a0"/></svg>
<span class="t bd" style="left:841px;top:228px;height:20px;line-height:20px;font-size:14px;color:#17233d;">类型</span>
<div class="b" style="left:892px;top:230px;width:16px;height:16px;border-radius:50%;background:#2d8cf0;"></div>
<div class="b" style="left:897.2px;top:235.2px;width:5.6px;height:5.6px;border-radius:50%;background:#fff;"></div>
<span class="t " style="left:919px;top:229px;height:20px;line-height:20px;font-size:12px;color:#2d8cf0;">客户</span>
<div class="b" style="left:949px;top:230px;width:16px;height:16px;border-radius:50%;border:1px solid #dcdee2;background:#fff;"></div>
<span class="t " style="left:976.5px;top:229px;height:20px;line-height:20px;font-size:12px;color:#17233d;">客户/供应商</span>
<span class="t bd" style="left:841px;top:260.5px;height:20px;line-height:20px;font-size:14px;color:#17233d;">基础信息</span>
<div class="b" style="left:840px;top:281px;width:841px;height:1px;background:#eeeeee;"></div>
<span class="t " style="left:836px;top:298px;height:20px;line-height:20px;font-size:13px;color:#ed4014;">*</span>
<span class="t " style="left:847px;top:297.5px;height:20px;line-height:20px;font-size:13px;color:#17233d;">客户编号</span>
<div class="fld" style="left:929.3px;top:294px;width:307.5px;height:30px;"></div>
<span class="t " style="left:935px;top:299.5px;height:20px;line-height:20px;font-size:12.3px;color:#515a6e;">KH0005</span>
<svg class="b" style="left:1224.2px;top:306.5px;" width="8" height="5" viewBox="0 0 8 5" ><path d="M0.3 0.3 H7.7 L4 4.7 Z" fill="#666"/></svg>
<span class="t " style="left:1256px;top:298px;height:20px;line-height:20px;font-size:13px;color:#ed4014;">*</span>
<span class="t " style="left:1267px;top:297.5px;height:20px;line-height:20px;font-size:13px;color:#17233d;">客户名称</span>
<div class="fld" style="left:1349px;top:294px;width:310px;height:30px;"></div>
<span class="t " style="left:1355px;top:299.5px;height:20px;line-height:20px;font-size:12.3px;color:#515a6e;">月结客户</span>
<span class="t " style="left:840.5px;top:344.5px;height:20px;line-height:20px;font-size:13px;color:#17233d;">客户类别</span>
<div class="fld" style="left:929.3px;top:341px;width:309.2px;height:30px;"></div>
<span class="t " style="left:935px;top:346.5px;height:20px;line-height:20px;font-size:12.3px;color:#515a6e;">类别</span>
<svg class="b" style="left:1226px;top:353.5px;" width="8" height="5" viewBox="0 0 8 5" ><path d="M0.3 0.3 H7.7 L4 4.7 Z" fill="#666"/></svg>
<span class="t " style="left:1260.5px;top:344.5px;height:20px;line-height:20px;font-size:13px;color:#17233d;">客户等级</span>
<div class="fld" style="left:1349px;top:341px;width:310px;height:30px;"></div>
<span class="t " style="left:1355px;top:346.5px;height:20px;line-height:20px;font-size:12.3px;color:#515a6e;">VIP客户</span>
<svg class="b" style="left:1646px;top:353.5px;" width="8" height="5" viewBox="0 0 8 5" ><path d="M0.3 0.3 H7.7 L4 4.7 Z" fill="#666"/></svg>
<svg class="b" style="left:1317px;top:347.3px;" width="16" height="16" viewBox="0 0 16 16" ><circle cx="8" cy="8" r="6.6" fill="none" stroke="#555" stroke-width="1.2"/><path d="M6.3 4.9 L11 8 L6.3 11.1 Z" fill="none" stroke="#555" stroke-width="1.1" stroke-linejoin="round"/></svg>
<span class="t " style="left:840.5px;top:391.5px;height:20px;line-height:20px;font-size:13px;color:#17233d;">余额日期</span>
<div class="fld" style="left:929.3px;top:388px;width:309.2px;height:30px;"></div>
<span class="t " style="left:935px;top:393.5px;height:20px;line-height:20px;font-size:12.3px;color:#515a6e;">2024-03-01</span>
<svg class="b" style="left:1216.5px;top:394px;" width="17" height="17" viewBox="0 0 17 17" ><g fill="none" stroke="#8a8a8a" stroke-width="1.2" stroke-linejoin="miter"><path d="M0.7 2.7 H2.8 V6 H6.5 V2.7 H10.2 V6 H14.3 V2.7 H16.4 V16.1 H0.7 Z"/><path d="M4.8 0.7 V4 M12.1 0.7 V4"/></g><g fill="#8a8a8a"><rect x="3.6" y="8.6" width="1.9" height="1.9"/><rect x="7.6" y="8.6" width="1.9" height="1.9"/><rect x="11.6" y="8.6" width="1.9" height="1.9"/><rect x="3.6" y="11.7" width="1.9" height="1.9"/><rect x="7.6" y="11.7" width="1.9" height="1.9"/><rect x="11.6" y="11.7" width="1.9" height="1.9"/></g></svg>
<span class="t " style="left:1260.5px;top:391.5px;height:20px;line-height:20px;font-size:13px;color:#17233d;">期初应收款</span>
<div class="fld" style="left:1349px;top:388px;width:310px;height:30px;"></div>
<span class="t " style="left:840.5px;top:437.5px;height:20px;line-height:20px;font-size:13px;color:#17233d;">期初预收款</span>
<div class="fld" style="left:929.3px;top:434px;width:309.2px;height:30px;"></div>
<span class="t " style="left:1260.5px;top:437.5px;height:20px;line-height:20px;font-size:13px;color:#17233d;">业务员</span>
<div class="fld" style="left:1349px;top:434px;width:310px;height:30px;"></div>
<span class="t " style="left:1355px;top:439.5px;height:20px;line-height:20px;font-size:12.3px;color:#515a6e;">(空)</span>
<svg class="b" style="left:1646px;top:446.5px;" width="8" height="5" viewBox="0 0 8 5" ><path d="M0.3 0.3 H7.7 L4 4.7 Z" fill="#666"/></svg>
<span class="t " style="left:840.5px;top:484.5px;height:20px;line-height:20px;font-size:13px;color:#17233d;">交货方式</span>
<div class="fld" style="left:929.3px;top:481px;width:309.2px;height:30px;"></div>
<span class="t " style="left:935px;top:486.5px;height:20px;line-height:20px;font-size:12.3px;color:#515a6e;">&nbsp;&nbsp;(空)</span>
<svg class="b" style="left:1226px;top:493.5px;" width="8" height="5" viewBox="0 0 8 5" ><path d="M0.3 0.3 H7.7 L4 4.7 Z" fill="#666"/></svg>
<span class="t " style="left:1260.5px;top:484.5px;height:20px;line-height:20px;font-size:13px;color:#17233d;">地区</span>
<div class="fld" style="left:1349px;top:481px;width:310px;height:30px;"></div>
<svg class="b" style="left:1646px;top:493.5px;" width="8" height="5" viewBox="0 0 8 5" ><path d="M0.3 0.3 H7.7 L4 4.7 Z" fill="#666"/></svg>
<span class="t " style="left:840.5px;top:531.5px;height:20px;line-height:20px;font-size:13px;color:#17233d;">收款条件</span>
<div class="fld" style="left:929.3px;top:528px;width:309.2px;height:30px;"></div>
<span class="t " style="left:935px;top:533.5px;height:20px;line-height:20px;font-size:12.3px;color:#515a6e;">月结</span>
<svg class="b" style="left:1226px;top:540.5px;" width="8" height="5" viewBox="0 0 8 5" ><path d="M0.3 0.3 H7.7 L4 4.7 Z" fill="#666"/></svg>
<svg class="b" style="left:896.5px;top:533.6px;" width="16" height="16" viewBox="0 0 16 16" ><circle cx="8" cy="8" r="7.2" fill="none" stroke="#444" stroke-width="1.1"/><text x="8" y="11.6" font-size="10.5" text-anchor="middle" fill="#333" font-family="Liberation Sans, sans-serif">?</text></svg>
<span class="t " style="left:1260.5px;top:531.5px;height:20px;line-height:20px;font-size:13px;color:#17233d;">关联线路</span>
<div class="fld" style="left:1349px;top:528px;width:143px;height:30px;"></div>
<span class="t" style="left:1355px;top:533.5px;height:20px;line-height:20px;font-size:12px;color:#515a6e;width:115px;overflow:hidden;">新线路 深圳-东莞-惠州</span>
<span class="t bd" style="left:1472.2px;top:532.3px;height:20px;line-height:20px;font-size:12.5px;color:#222;letter-spacing:-0.2px;">···</span>
<svg class="b" style="left:1020px;top:565px;" width="18" height="9" viewBox="0 0 18 9" ><path d="M0 9 L9 0 L18 9 Z" fill="#f3f3f3"/></svg>
<div class="b" style="left:842px;top:573.5px;width:620px;height:123px;background:#f3f3f3;"></div>
<span class="t " style="left:883px;top:594px;height:20px;line-height:20px;font-size:14px;color:#5c5f66;">下单日</span>
<span class="t " style="left:1004px;top:594px;height:20px;line-height:20px;font-size:14px;color:#5c5f66;">账期</span>
<span class="t " style="left:1110px;top:594px;height:20px;line-height:20px;font-size:14px;color:#5c5f66;">对账日</span>
<span class="t " style="left:1230.5px;top:594px;height:20px;line-height:20px;font-size:14px;color:#5c5f66;">结款日</span>
<span class="t " style="left:1351px;top:594px;height:20px;line-height:20px;font-size:14px;color:#5c5f66;">收款到期日</span>
<div class="b" style="left:935px;top:602.5px;width:59.5px;height:1px;background:#d6d6d6;"></div>
<div class="b" style="left:1041.5px;top:602.5px;width:58.5px;height:1px;background:#d6d6d6;"></div>
<div class="b" style="left:1161.5px;top:602.5px;width:59px;height:1px;background:#d6d6d6;"></div>
<div class="b" style="left:1282.5px;top:602.5px;width:58.5px;height:1px;background:#d6d6d6;"></div>
<div class="fld" style="left:854px;top:625px;width:131.5px;height:29.5px;"></div>
<span class="t " style="left:860px;top:630.3px;height:20px;line-height:20px;font-size:15px;color:#515a6e;">2024-08-30</span>
<svg class="b" style="left:963.5px;top:631px;" width="17" height="17" viewBox="0 0 17 17" ><g fill="none" stroke="#8a8a8a" stroke-width="1.2" stroke-linejoin="miter"><path d="M0.7 2.7 H2.8 V6 H6.5 V2.7 H10.2 V6 H14.3 V2.7 H16.4 V16.1 H0.7 Z"/><path d="M4.8 0.7 V4 M12.1 0.7 V4"/></g><g fill="#8a8a8a"><rect x="3.6" y="8.6" width="1.9" height="1.9"/><rect x="7.6" y="8.6" width="1.9" height="1.9"/><rect x="11.6" y="8.6" width="1.9" height="1.9"/><rect x="3.6" y="11.7" width="1.9" height="1.9"/><rect x="7.6" y="11.7" width="1.9" height="1.9"/><rect x="11.6" y="11.7" width="1.9" height="1.9"/></g></svg>
<div class="fld" style="left:995.5px;top:625px;width:42.5px;height:29.5px;"></div>
<span class="t " style="left:1001.5px;top:630.3px;height:20px;line-height:20px;font-size:15px;color:#515a6e;">1</span>
<span class="t " style="left:1049.5px;top:628px;height:20px;line-height:20px;font-size:14px;color:#5c5f66;">月</span>
<span class="t " style="left:1081.5px;top:628px;height:20px;line-height:20px;font-size:14px;color:#5c5f66;">每月</span>
<div class="fld" style="left:1110.5px;top:625px;width:43px;height:29.5px;"></div>
<span class="t " style="left:1116.5px;top:630.3px;height:20px;line-height:20px;font-size:15px;color:#515a6e;">1</span>
<span class="t " style="left:1165px;top:628px;height:20px;line-height:20px;font-size:14px;color:#5c5f66;">日</span>
<span class="t " style="left:1199.5px;top:628px;height:20px;line-height:20px;font-size:14px;color:#5c5f66;">每月</span>
<div class="fld" style="left:1229px;top:625px;width:42.5px;height:29.5px;"></div>
<span class="t " style="left:1235px;top:630.3px;height:20px;line-height:20px;font-size:15px;color:#515a6e;">5</span>
<span class="t " style="left:1283px;top:628px;height:20px;line-height:20px;font-size:14px;color:#5c5f66;">日</span>
<div class="fld" style="left:1315.5px;top:625px;width:131px;height:29.5px;"></div>
<span class="t " style="left:1321.5px;top:630.3px;height:20px;line-height:20px;font-size:15px;color:#9a9ca3;">2024-09-30</span>
<svg class="b" style="left:1424.5px;top:631px;" width="17" height="17" viewBox="0 0 17 17" ><g fill="none" stroke="#8a8a8a" stroke-width="1.2" stroke-linejoin="miter"><path d="M0.7 2.7 H2.8 V6 H6.5 V2.7 H10.2 V6 H14.3 V2.7 H16.4 V16.1 H0.7 Z"/><path d="M4.8 0.7 V4 M12.1 0.7 V4"/></g><g fill="#8a8a8a"><rect x="3.6" y="8.6" width="1.9" height="1.9"/><rect x="7.6" y="8.6" width="1.9" height="1.9"/><rect x="11.6" y="8.6" width="1.9" height="1.9"/><rect x="3.6" y="11.7" width="1.9" height="1.9"/><rect x="7.6" y="11.7" width="1.9" height="1.9"/><rect x="11.6" y="11.7" width="1.9" height="1.9"/></g></svg>
<span class="t " style="left:854px;top:666px;height:20px;line-height:20px;font-size:14px;color:#5c5f66;">账期预览：当前客户账期是<span style="color:#f0582a">1个月，每个月1日</span>对账， <span style="color:#f0582a">5日</span> 客户会给我打款</span>
<span class="t bd" style="left:840.5px;top:708.5px;height:20px;line-height:20px;font-size:14px;color:#17233d;">发票信息</span>
<div class="b" style="left:840px;top:729px;width:841px;height:1px;background:#eeeeee;"></div>
<span class="t " style="left:840.5px;top:745.5px;height:20px;line-height:20px;font-size:13px;color:#17233d;">开票公司名</span>
<div class="fld" style="left:929.3px;top:741px;width:309.2px;height:30px;"></div>
<span class="t " style="left:1260.5px;top:745.5px;height:20px;line-height:20px;font-size:13px;color:#17233d;">纳税人识别号</span>
<div class="fld" style="left:1349px;top:741px;width:310px;height:30px;"></div>
<svg class="b" style="left:0;top:0;" width="1807" height="775" viewBox="0 0 1807 775">
<g fill="none" stroke="#f53838" stroke-width="2.6">
<rect x="114.3" y="582.5" width="252.4" height="68"/>
<rect x="410" y="420" width="35.5" height="39"/>
<rect x="1238.8" y="515.7" width="265.7" height="51.1" stroke-width="3.1"/>
</g><g fill="#f53838" stroke="none">
<path d="M473 417.3 L854.2 330.6 L853.4 326.3 L870.3 331 L856.5 341.4 L855.3 337.9 Z"/>
<path d="M1073.9 355.1 L1188.7 459 L1191.6 455.7 L1197.7 471.6 L1180.3 466.7 L1183.8 464.8 Z"/>
<path d="M1172 520 L406.8 606.2 L406.5 602 L390.3 610.6 L407.7 616.5 L407.7 613.2 Z"/>
</g></svg>
<span class="wm" style="left:30.5px;top:19.4px;">电话：<i>4006-6500-27</i></span>
<span class="wm" style="left:30.5px;top:48.5px;">网址：<u>www.tdxsoft.com</u></span>
<span class="wm" style="left:301.5px;top:19.4px;">电话：<i>4006-6500-27</i></span>
<span class="wm" style="left:301.5px;top:48.5px;">网址：<u>www.tdxsoft.com</u></span>
<span class="wm" style="left:572.5px;top:19.4px;">电话：<i>4006-6500-27</i></span>
<span class="wm" style="left:572.5px;top:48.5px;">网址：<u>www.tdxsoft.com</u></span>
<span class="wm" style="left:843.5px;top:19.4px;">电话：<i>4006-6500-27</i></span>
<span class="wm" style="left:843.5px;top:48.5px;">网址：<u>www.tdxsoft.com</u></span>
<span class="wm" style="left:1114.5px;top:19.4px;">电话：<i>4006-6500-27</i></span>
<span class="wm" style="left:1114.5px;top:48.5px;">网址：<u>www.tdxsoft.com</u></span>
<span class="wm" style="left:1385.5px;top:19.4px;">电话：<i>4006-6500-27</i></span>
<span class="wm" style="left:1385.5px;top:48.5px;">网址：<u>www.tdxsoft.com</u></span>
<span class="wm" style="left:1656.5px;top:19.4px;">电话：<i>4006-6500-27</i></span>
<span class="wm" style="left:1656.5px;top:48.5px;">网址：<u>www.tdxsoft.com</u></span>
<span class="wm" style="left:30.5px;top:129.4px;">电话：<i>4006-6500-27</i></span>
<span class="wm" style="left:30.5px;top:158.5px;">网址：<u>www.tdxsoft.com</u></span>
<span class="wm" style="left:301.5px;top:129.4px;">电话：<i>4006-6500-27</i></span>
<span class="wm" style="left:301.5px;top:158.5px;">网址：<u>www.tdxsoft.com</u></span>
<span class="wm" style="left:572.5px;top:129.4px;">电话：<i>4006-6500-27</i></span>
<span class="wm" style="left:572.5px;top:158.5px;">网址：<u>www.tdxsoft.com</u></span>
<span class="wm" style="left:843.5px;top:129.4px;">电话：<i>4006-6500-27</i></span>
<span class="wm" style="left:843.5px;top:158.5px;"><span style="color:transparent">网址：</span><u>www.tdxsoft.com</u></span>
<span class="wm" style="left:1114.5px;top:129.4px;">电话：<i>4006-6500-27</i></span>
<span class="wm" style="left:1114.5px;top:158.5px;">网址：<u>www.tdxsoft.com</u></span>
<span class="wm" style="left:1385.5px;top:129.4px;">电话：<i>4006-6500-27</i></span>
<span class="wm" style="left:1385.5px;top:158.5px;">网址：<u>www.tdxsoft.com</u></span>
<span class="wm" style="left:1656.5px;top:129.4px;">电话：<i>4006-6500-27</i></span>
<span class="wm" style="left:1656.5px;top:158.5px;">网址：<u>www.tdxsoft.com</u></span>
<span class="wm" style="left:30.5px;top:239.4px;">电话：<i>4006-6500-27</i></span>
<span class="wm" style="left:30.5px;top:268.5px;">网址：<u>www.tdxsoft.com</u></span>
<span class="wm" style="left:301.5px;top:239.4px;">电话：<i>4006-6500-27</i></span>
<span class="wm" style="left:301.5px;top:268.5px;">网址：<u>www.tdxsoft.com</u></span>
<span class="wm" style="left:572.5px;top:239.4px;">电话：<i>4006-6500-27</i></span>
<span class="wm" style="left:572.5px;top:268.5px;">网址：<u>www.tdxsoft.com</u></span>
<span class="wm" style="left:843.5px;top:239.4px;">电话：<i>4006-6500-27</i></span>
<span class="wm" style="left:843.5px;top:268.5px;">网址：<u>www.tdxsoft.com</u></span>
<span class="wm" style="left:1114.5px;top:239.4px;">电话：<i>4006-6500-27</i></span>
<span class="wm" style="left:1114.5px;top:268.5px;">网址：<u>www.tdxsoft.com</u></span>
<span class="wm" style="left:1385.5px;top:239.4px;">电话：<i>4006-6500-27</i></span>
<span class="wm" style="left:1385.5px;top:268.5px;">网址：<u>www.tdxsoft.com</u></span>
<span class="wm" style="left:1656.5px;top:239.4px;">电话：<i>4006-6500-27</i></span>
<span class="wm" style="left:1656.5px;top:268.5px;">网址：<u>www.tdxsoft.com</u></span>
<span class="wm" style="left:30.5px;top:349.4px;">电话：<i>4006-6500-27</i></span>
<span class="wm" style="left:30.5px;top:378.5px;">网址：<u>www.tdxsoft.com</u></span>
<span class="wm" style="left:301.5px;top:349.4px;">电话：<i>4006-6500-27</i></span>
<span class="wm" style="left:301.5px;top:378.5px;">网址：<u>www.tdxsoft.com</u></span>
<span class="wm" style="left:572.5px;top:349.4px;">电话：<i>4006-6500-27</i></span>
<span class="wm" style="left:572.5px;top:378.5px;">网址：<u>www.tdxsoft.com</u></span>
<span class="wm" style="left:843.5px;top:349.4px;">电话：<i>4006-6500-27</i></span>
<span class="wm" style="left:843.5px;top:378.5px;">网址：<u>www.tdxsoft.com</u></span>
<span class="wm" style="left:1114.5px;top:349.4px;">电话：<i>4006-6500-27</i></span>
<span class="wm" style="left:1114.5px;top:378.5px;">网址：<u>www.tdxsoft.com</u></span>
<span class="wm" style="left:1385.5px;top:349.4px;">电话：<i>4006-6500-27</i></span>
<span class="wm" style="left:1385.5px;top:378.5px;">网址：<u>www.tdxsoft.com</u></span>
<span class="wm" style="left:1656.5px;top:349.4px;">电话：<i>4006-6500-27</i></span>
<span class="wm" style="left:1656.5px;top:378.5px;">网址：<u>www.tdxsoft.com</u></span>
<span class="wm" style="left:30.5px;top:459.4px;">电话：<i>4006-6500-27</i></span>
<span class="wm" style="left:30.5px;top:488.5px;">网址：<u>www.tdxsoft.com</u></span>
<span class="wm" style="left:301.5px;top:459.4px;">电话：<i>4006-6500-27</i></span>
<span class="wm" style="left:301.5px;top:488.5px;">网址：<u>www.tdxsoft.com</u></span>
<span class="wm" style="left:572.5px;top:459.4px;">电话：<i>4006-6500-27</i></span>
<span class="wm" style="left:572.5px;top:488.5px;">网址：<u>www.tdxsoft.com</u></span>
<span class="wm" style="left:843.5px;top:459.4px;">电话：<i>4006-6500-27</i></span>
<span class="wm" style="left:843.5px;top:488.5px;">网址：<u>www.tdxsoft.com</u></span>
<span class="wm" style="left:1114.5px;top:459.4px;">电话：<i>4006-6500-27</i></span>
<span class="wm" style="left:1114.5px;top:488.5px;">网址：<u>www.tdxsoft.com</u></span>
<span class="wm" style="left:1385.5px;top:459.4px;">电话：<i>4006-6500-27</i></span>
<span class="wm" style="left:1385.5px;top:488.5px;">网址：<u>www.tdxsoft.com</u></span>
<span class="wm" style="left:1656.5px;top:459.4px;">电话：<i>4006-6500-27</i></span>
<span class="wm" style="left:1656.5px;top:488.5px;">网址：<u>www.tdxsoft.com</u></span>
<span class="wm" style="left:30.5px;top:569.4px;">电话：<i>4006-6500-27</i></span>
<span class="wm" style="left:30.5px;top:598.5px;">网址：<u>www.tdxsoft.com</u></span>
<span class="wm" style="left:301.5px;top:569.4px;">电话：<i>4006-6500-27</i></span>
<span class="wm" style="left:301.5px;top:598.5px;">网址：<u>www.tdxsoft.com</u></span>
<span class="wm" style="left:572.5px;top:569.4px;">电话：<i>4006-6500-27</i></span>
<span class="wm" style="left:572.5px;top:598.5px;">网址：<u>www.tdxsoft.com</u></span>
<span class="wm" style="left:843.5px;top:569.4px;">电话：<i>4006-6500-27</i></span>
<span class="wm" style="left:843.5px;top:598.5px;">网址：<u>www.tdxsoft.com</u></span>
<span class="wm" style="left:1114.5px;top:569.4px;">电话：<i>4006-6500-27</i></span>
<span class="wm" style="left:1114.5px;top:598.5px;">网址：<u>www.tdxsoft.com</u></span>
<span class="wm" style="left:1385.5px;top:569.4px;">电话：<i>4006-6500-27</i></span>
<span class="wm" style="left:1385.5px;top:598.5px;">网址：<u>www.tdxsoft.com</u></span>
<span class="wm" style="left:1656.5px;top:569.4px;">电话：<i>4006-6500-27</i></span>
<span class="wm" style="left:1656.5px;top:598.5px;">网址：<u>www.tdxsoft.com</u></span>
<span class="wm" style="left:30.5px;top:679.4px;">电话：<i>4006-6500-27</i></span>
<span class="wm" style="left:30.5px;top:708.5px;">网址：<u>www.tdxsoft.com</u></span>
<span class="wm" style="left:301.5px;top:679.4px;">电话：<i>4006-6500-27</i></span>
<span class="wm" style="left:301.5px;top:708.5px;">网址：<u>www.tdxsoft.com</u></span>
<span class="wm" style="left:572.5px;top:679.4px;">电话：<i>4006-6500-27</i></span>
<span class="wm" style="left:572.5px;top:708.5px;">网址：<u>www.tdxsoft.com</u></span>
<span class="wm" style="left:843.5px;top:679.4px;">电话：<i>4006-6500-27</i></span>
<span class="wm" style="left:843.5px;top:708.5px;"><span style="color:transparent">网址：</span><u>www.tdxsoft.com</u></span>
<span class="wm" style="left:1114.5px;top:679.4px;">电话：<i>4006-6500-27</i></span>
<span class="wm" style="left:1114.5px;top:708.5px;">网址：<u>www.tdxsoft.com</u></span>
<span class="wm" style="left:1385.5px;top:679.4px;">电话：<i>4006-6500-27</i></span>
<span class="wm" style="left:1385.5px;top:708.5px;">网址：<u>www.tdxsoft.com</u></span>
<span class="wm" style="left:1656.5px;top:679.4px;">电话：<i>4006-6500-27</i></span>
<span class="wm" style="left:1656.5px;top:708.5px;">网址：<u>www.tdxsoft.com</u></span>
<div class="b" style="left:842.5px;top:31px;width:939.8px;height:45.5px;background:rgba(0,0,0,0.098);"></div>
<div class="btn" style="left:851px;width:110px;">生成预收款单</div>
<div class="btn" style="left:973px;width:82px;">商品记录</div>
<div class="btn" style="left:1067px;width:96px;background:rgba(0,0,0,0.2);border-color:transparent;">生成销货单</div>
<div class="btn" style="left:1174px;width:62px;background:#2f8ff5;border-color:#2f8ff5;color:#fff;top:38.5px;height:30.5px;line-height:29px;">新增</div>
<div class="btn" style="left:1246px;width:76px;"><span style="position:absolute;left:13px;top:0">复制为</span></div>
<div class="btn" style="left:1333px;width:63px;"><span style="position:absolute;left:13px;top:0">打印</span></div>
<div class="btn" style="left:1407px;width:68px;">反审核</div>
<div class="btn" style="left:1486px;width:55px;">关闭</div>
<div class="btn" style="left:1552px;width:55px;">分享</div>
<div class="btn" style="left:1619px;width:54px;background:rgba(0,0,0,0.2);border-color:transparent;">变更</div>
<div class="btn" style="left:1684.5px;width:39px;background:#e6e6e6;border-color:#d9d9d9 #bcbcbc #bcbcbc #d9d9d9;border-radius:2px;"></div>
<div class="btn" style="left:1734.5px;width:39px;background:#f4f4f4;border-color:#dedede #bcbcbc #bcbcbc #dedede;border-radius:2px;"></div>
<svg class="b" style="left:1699.3px;top:49px;" width="8.5" height="11" viewBox="0 0 8.5 11" ><path d="M8 0.3 V10.7 L0.5 5.5 Z" fill="#8d8d8d"/></svg>
<svg class="b" style="left:1751px;top:49px;" width="8.5" height="11" viewBox="0 0 8.5 11" ><path d="M0.5 0.3 V10.7 L8 5.5 Z" fill="#222"/></svg>
<svg class="b" style="left:1307.8px;top:51.5px;" width="8" height="5" viewBox="0 0 8 5" ><path d="M0.3 0.3 H7.7 L4 4.7 Z" fill="#8a8a8a"/></svg>
<svg class="b" style="left:1380.7px;top:51.5px;" width="8" height="5" viewBox="0 0 8 5" ><path d="M0.3 0.3 H7.7 L4 4.7 Z" fill="#8a8a8a"/></svg>
</div></body></html>
